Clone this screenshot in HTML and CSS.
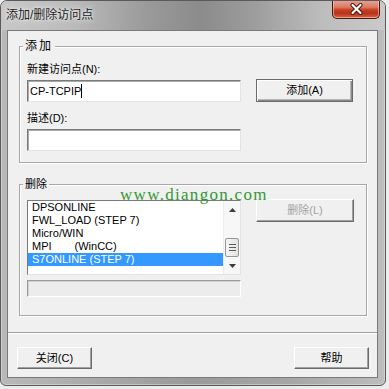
FILE: index.html
```html
<!DOCTYPE html>
<html lang="zh-CN">
<head>
<meta charset="utf-8">
<title>添加/删除访问点</title>
<link rel="stylesheet" href="styles.css">
</head>
<body>
<div class="window">
  <div class="titlebar">
    <span class="title">添加/删除访问点</span>
    <button class="close" aria-label="关闭">
      <svg width="13" height="12" viewBox="0 0 13 12">
        <path d="M2.5 2 L10.5 10 M10.5 2 L2.5 10" stroke="#4a1008" stroke-width="4" stroke-linecap="round"/>
        <path d="M2.5 2 L10.5 10 M10.5 2 L2.5 10" stroke="#ffffff" stroke-width="2.2" stroke-linecap="round"/>
      </svg>
    </button>
  </div>
  <div class="client">
    <fieldset class="group group-add">
      <legend class="legend-add">添加</legend>
      <div class="add-grid">
        <label class="lbl lbl-top">新建访问点(N):</label>
        <span></span>
        <div class="edit"><span>CP-TCPIP</span><span class="caret"></span></div>
        <button class="btn btn-default">添加(A)</button>
        <label class="lbl lbl-bottom">描述(D):</label>
        <span></span>
        <div class="edit"></div>
      </div>
    </fieldset>
    <fieldset class="group group-del">
      <legend>删除</legend>
      <div class="del-row">
        <div class="del-col">
          <div class="listbox">
            <ul class="items">
              <li>DPSONLINE</li>
              <li>FWL_LOAD (STEP 7)</li>
              <li>Micro/WIN</li>
              <li>MPI<span class="gap"></span>(WinCC)</li>
              <li class="selected">S7ONLINE (STEP 7)</li>
            </ul>
            <div class="vscroll">
              <div class="arrow">
                <svg width="7" height="4" viewBox="0 0 7 4"><path d="M0 4 L3.5 0 L7 4 Z" fill="#3c3c3c"/></svg>
              </div>
              <div class="track"><div class="thumb"><span class="grip"></span></div></div>
              <div class="arrow">
                <svg width="7" height="4" viewBox="0 0 7 4"><path d="M0 0 L3.5 4 L7 0 Z" fill="#3c3c3c"/></svg>
              </div>
            </div>
          </div>
          <div class="edit disabled"></div>
        </div>
        <button class="btn btn-del" disabled>删除(L)</button>
      </div>
    </fieldset>
    <hr class="sep">
    <div class="footer">
      <button class="btn btn-foot">关闭(C)</button>
      <button class="btn btn-foot">帮助</button>
    </div>
    <div class="watermark">www.diangon.com</div>
  </div>
</div>
</body>
</html>
```
FILE: styles.css
```css
* { box-sizing: border-box; }

body {
  margin: 0;
  background: #ececec;
  font: 11px/13px "Liberation Sans", "Noto Sans CJK SC", sans-serif;
  color: #000;
}

.window {
  width: 386px;
  height: 386px;
  border: 1px solid #5a5a5a;
  border-radius: 7px 7px 6px 6px;
  background: linear-gradient(90deg, #b9b9b9 0%, #a9a9a9 25%, #9a9a9a 50%, #a6a6a6 75%, #bdbdbd 100%);
  box-shadow: inset 0 0 0 1px rgba(255, 255, 255, 0.35);
  display: flex;
  flex-direction: column;
  overflow: hidden;
}

.titlebar {
  height: 29px;
  flex: none;
  display: flex;
  align-items: flex-start;
  padding: 0 5px;
  background: linear-gradient(90deg, #c8c8c8 0%, #bcbcbc 18%, #9a9a9a 38%, #8b8b8b 52%, #9d9d9d 66%, #bdbdbd 84%, #cacaca 100%);
}

.title {
  margin-top: 7px;
  font-size: 12px;
  line-height: 14px;
  color: #1e1e1e;
  text-shadow: 0 0 6px rgba(255, 255, 255, 0.9), 0 0 3px rgba(255, 255, 255, 0.7);
}

.close {
  margin-left: auto;
  margin-top: -1px;
  width: 48px;
  height: 19px;
  padding: 0;
  border: 1px solid #4c1a12;
  border-top: 0;
  border-radius: 0 0 5px 5px;
  background: linear-gradient(#e9a597 0%, #db7a66 40%, #c4401f 55%, #b8341a 75%, #d5694c 100%);
  box-shadow: inset 0 0 0 1px rgba(255, 210, 200, 0.55);
  display: flex;
  align-items: center;
  justify-content: center;
}

.client {
  flex: 1;
  margin: 0 7px 7px 6px;
  background: #f0f0f0;
  border: 1px solid #7a7a7a;
  position: relative;
  display: flex;
  flex-direction: column;
}

.group {
  margin: 0 10px 0 11px;
  border: 1px solid #a8a8a8;
  box-shadow: inset 1px 1px 0 #fff, 1px 1px 0 #fff;
  padding: 9px 7px 11px 7px;
  min-width: 0;
}

.group legend {
  padding: 0 2px;
  margin-left: -4px;
  font-size: 11px;
  line-height: 14px;
  background: #f0f0f0;
}

.group .legend-add {
  letter-spacing: 2px;
  font-size: 12px;
}

.group-add { margin-top: 8px; }
.group-del { margin-top: 14px; padding-bottom: 18px; }

.add-grid {
  display: grid;
  grid-template-columns: 214px 97px;
  grid-template-rows: 17px 23px 27px 22px;
  column-gap: 15px;
}

.lbl {
  line-height: 14px;
  white-space: nowrap;
}

.lbl-top { align-self: start; }
.lbl-bottom { align-self: end; margin-bottom: 4px; }

.edit {
  height: 22px;
  align-self: end;
  background: #fff;
  border: 1px solid;
  border-color: #7a7a7a #e3e3e3 #e3e3e3 #7a7a7a;
  box-shadow: inset 1px 1px 0 #a8a8a8;
  padding: 0 2px;
  line-height: 20px;
  white-space: nowrap;
}

.caret {
  display: inline-block;
  width: 1px;
  height: 14px;
  background: #000;
  vertical-align: -3px;
}

.btn {
  font: inherit;
  padding: 0;
  color: #000;
  background: #f0f0f0;
  border: 1px solid;
  border-color: #fff #6a6a6a #6a6a6a #fff;
  box-shadow: inset -1px -1px 0 #a0a0a0;
}

.btn-default {
  height: 23px;
  border-color: #6a6a6a;
  box-shadow: inset 1px 1px 0 #fff, inset -1px -1px 0 #8a8a8a, inset -2px -2px 0 #b4b4b4;
}

.del-row {
  display: flex;
  align-items: flex-start;
  gap: 15px;
}

.del-col {
  width: 214px;
  display: flex;
  flex-direction: column;
  gap: 5px;
}

.listbox {
  height: 75px;
  display: flex;
  background: #fff;
  border: 1px solid;
  border-color: #7a7a7a #e3e3e3 #e3e3e3 #7a7a7a;
}

.items {
  flex: 1;
  margin: 0;
  padding: 0;
  list-style: none;
}

.items li {
  height: 13px;
  line-height: 13px;
  padding-left: 4px;
  white-space: nowrap;
}

.items li.selected {
  background: #3399ff;
  color: #fff;
}

.gap {
  display: inline-block;
  width: 23px;
}

.vscroll {
  width: 17px;
  display: flex;
  flex-direction: column;
  background: #f7f7f7;
  border-left: 1px solid #ececec;
}

.arrow {
  height: 17px;
  flex: none;
  display: flex;
  align-items: center;
  justify-content: center;
}

.track {
  flex: 1;
  display: flex;
  flex-direction: column;
  justify-content: flex-end;
  padding: 0 1px 0 1px;
}

.thumb {
  height: 19px;
  border: 1px solid #979797;
  border-radius: 2px;
  background: linear-gradient(90deg, #f6f6f6, #e2e2e2);
  display: flex;
  align-items: center;
  justify-content: center;
}

.grip {
  width: 7px;
  height: 7px;
  border-top: 1px solid #5c5c5c;
  border-bottom: 1px solid #5c5c5c;
  background: linear-gradient(#5c5c5c, #5c5c5c) center / 7px 1px no-repeat;
}

.edit.disabled {
  align-self: stretch;
  height: 17px;
  background: #ececec;
  border-color: #9a9a9a #fff #fff #9a9a9a;
  box-shadow: inset 1px 1px 0 #d0d0d0;
}

.btn-del {
  width: 98px;
  height: 23px;
  margin-top: -1px;
  color: #a3a3a3;
}

.sep {
  margin: 16px 0 0 0;
  border: 0;
  height: 1px;
  background: #a0a0a0;
  box-shadow: 0 1px 0 #fff;
}

.footer {
  margin-top: 14px;
  display: flex;
  justify-content: space-between;
  padding: 0 8px 0 9px;
}

.btn-foot {
  width: 75px;
  height: 22px;
}

.watermark {
  position: absolute;
  left: 112px;
  top: 155px;
  font: 17px/17px "Liberation Serif", "DejaVu Serif", serif;
  letter-spacing: 1.3px;
  color: #359835;
  white-space: nowrap;
  pointer-events: none;
}
```
